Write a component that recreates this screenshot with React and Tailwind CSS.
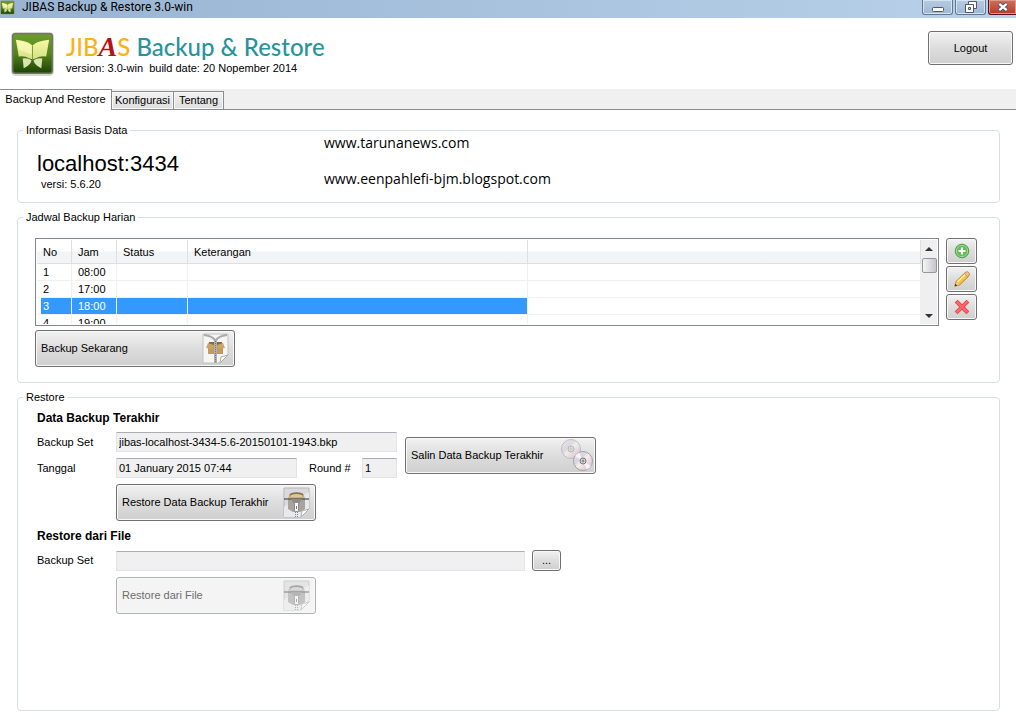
import React, { useState } from 'react';

const SCHEDULE = [
    { no: 1, jam: '08:00' },
    { no: 2, jam: '17:00' },
    { no: 3, jam: '18:00' },
    { no: 4, jam: '19:00' },
];

const TABS = [
    { label: 'Backup And Restore', className: 'w-[112px]' },
    { label: 'Konfigurasi', className: 'w-[62px]' },
    { label: 'Tentang', className: 'w-[50px]' },
];

const AppLogo = ({ className }) => (
    <svg viewBox="0 0 46 46" className={className} aria-hidden="true">
        <defs>
            <linearGradient id="logoBg" x1="0" y1="0" x2="0" y2="1">
                <stop offset="0" stopColor="#6d9d2c" />
                <stop offset="0.5" stopColor="#55831c" />
                <stop offset="1" stopColor="#1d4506" />
            </linearGradient>
            <linearGradient id="logoWing" x1="0" y1="0" x2="0" y2="1">
                <stop offset="0" stopColor="#f8f9a4" />
                <stop offset="1" stopColor="#d5df86" />
            </linearGradient>
        </defs>
        <rect x="1" y="1" width="44" height="45" rx="5" fill="#b9b9b9" opacity="0.6" />
        <rect x="2" y="2" width="42" height="42" rx="3" fill="#6f7a5c" />
        <rect x="3.5" y="3.5" width="39" height="39" rx="2" fill="url(#logoBg)" />
        <path d="M6 9Q17 10 22 14L23 15L24 14Q29 10 40 9L37 26Q31 25 26 28L23 29L20 28Q15 25 9 26Z" fill="url(#logoWing)" />
        <path d="M7 10Q17 11 22 16L22 24L9 19Z" fill="#fbfbc0" opacity="0.6" />
        <path d="M23 15V29" stroke="#7c9a40" />
        <path d="M13 28Q18 27 22 30Q21 35 14 38ZM33 28Q28 27 24 30Q25 35 32 38Z" fill="#dbe4ae" />
    </svg>
);

const BoxFileIcon = () => (
    <svg viewBox="0 0 27 31" className="h-[31px] w-[27px] shrink-0" aria-hidden="true">
        <path d="M1 1H26V22L18 30H1Z" fill="#f5f5f5" stroke="#c2c2c2" />
        <path d="M26 22L18 30L19 24Z" fill="#fff" stroke="#aaa" />
        <path d="M6 12H21V21H6Z" fill="#c49a5c" />
        <path d="M7 9H20L21 13H6Z" fill="#8b683a" />
        <path d="M4 15L6 10L12 12L11 16ZM23 15L21 10L15 12L16 16Z" fill="#cda468" />
        <path d="M2 2Q11 3 13.5 8Q16 3 25 2" fill="none" stroke="#a9a9a9" strokeWidth="2" />
        <path d="M13.5 7V30" stroke="#b0b0b0" strokeWidth="3" />
        <path d="M13.5 8V30" stroke="#7a7a7a" strokeDasharray="1 1" />
    </svg>
);

const ZipFileIcon = ({ gray }) => (
    <svg viewBox="0 0 27 31" className={`h-[31px] w-[27px] shrink-0 ${gray ? 'opacity-60 grayscale' : ''}`} aria-hidden="true">
        <path d="M1 1H26V22L18 30H1Z" fill="#d9dadd" stroke="#b3b5ba" />
        <path d="M1 20L26 5V22L18 30H1Z" fill="#e8e9ec" />
        <path d="M26 22L18 30L19 24Z" fill="#fff" stroke="#b0b0b0" />
        <path d="M5 12H22V22L17 25H10L5 22Z" fill="#a9a49b" />
        <path d="M5 12L6 8Q13 3 21 8L22 12Z" fill="#c9ae80" />
        <ellipse cx="13.5" cy="7.5" rx="7" ry="2.2" fill="#8a7149" />
        <path d="M8 8Q13 6 19 8V10H8Z" fill="#ddc69b" />
        <path d="M1 12H26" stroke="#494b58" strokeWidth="1.2" />
        <path d="M8 12H19L16 17H11Z" fill="#8b8b8b" />
        <rect x="11.5" y="15.5" width="4" height="9" rx="1" fill="#f7f7f7" stroke="#8a8a8a" />
        <path d="M13.5 19V22" stroke="#777" />
        <path d="M12.5 25V30M14.5 25V30" stroke="#888" strokeDasharray="1 1" />
    </svg>
);

const DiscsIcon = () => (
    <svg viewBox="0 0 34 34" className="size-[34px] shrink-0" aria-hidden="true">
        <defs>
            <linearGradient id="disc" x1="0" y1="0" x2="1" y2="1">
                <stop offset="0" stopColor="#ece9ee" />
                <stop offset="0.35" stopColor="#d9d4df" />
                <stop offset="0.5" stopColor="#f4f0e9" />
                <stop offset="0.75" stopColor="#e4cfdb" />
                <stop offset="1" stopColor="#e9e9ee" />
            </linearGradient>
        </defs>
        <g opacity="0.8">
            <circle cx="11" cy="11" r="9.5" fill="url(#disc)" stroke="#b5b2b8" />
            <circle cx="11" cy="11" r="3" fill="#dedede" stroke="#aaa" />
            <circle cx="11" cy="11" r="1" fill="#fff" stroke="#999" strokeWidth="0.6" />
        </g>
        <circle cx="23" cy="23" r="9.5" fill="url(#disc)" stroke="#a39fa6" />
        <path d="M23 23L15 18A9.5 9.5 0 0 1 19 14.5ZM23 23L31 28A9.5 9.5 0 0 1 27 31.5Z" fill="#fff" opacity="0.7" />
        <circle cx="23" cy="23" r="3" fill="#ddd" stroke="#777" />
        <circle cx="23" cy="23" r="1" fill="#fff" stroke="#555" strokeWidth="0.8" />
    </svg>
);

const AddIcon = () => (
    <svg viewBox="0 0 16 16" className="size-4" aria-hidden="true">
        <circle cx="8" cy="8" r="6.8" fill="#62b957" stroke="#4f9e48" />
        <circle cx="8" cy="8" r="5.6" fill="none" stroke="#a3d99b" />
        <path d="M8 4.5V11.5M4.5 8H11.5" stroke="#fff" strokeWidth="2.2" />
    </svg>
);

const EditIcon = () => (
    <svg viewBox="0 0 16 16" className="size-4" aria-hidden="true">
        <path d="M1 15L2 10.5L11 1.8Q13 .3 14.7 2Q16 3.8 14.4 5.5L5.5 14Z" fill="#f4c542" stroke="#b98227" />
        <path d="M3.3 11L11.5 3.2" stroke="#fdf0a0" strokeWidth="1.4" />
        <path d="M10.5 2.3L12 .9Q14 .3 15.2 2Q15.8 4 14.2 5.6L13.6 6Z" fill="#eec0a0" stroke="#b5834f" strokeWidth="0.7" />
        <path d="M1 15L2 11L5 14Z" fill="#e8cf9f" />
        <path d="M.6 15.4L1.3 12.6L3.4 14.7Z" fill="#5b3d12" />
    </svg>
);

const DeleteIcon = () => (
    <svg viewBox="0 0 16 16" className="size-4" aria-hidden="true">
        <path d="M3.5 3.5L12.5 12.5M12.5 3.5L3.5 12.5" stroke="#e5454b" strokeWidth="4" strokeLinecap="square" />
        <path d="M3.5 3.5L12.5 12.5M12.5 3.5L3.5 12.5" stroke="#ff666b" strokeWidth="2.4" strokeLinecap="square" />
    </svg>
);

const Button = ({ className = '', children, ...props }) => (
    <button
        type="button"
        className={`flex shrink-0 items-center rounded-[3px] border border-[#707070] bg-linear-to-b from-[#f2f2f2] from-0% via-[#dddddd] via-50% to-[#cfcfcf] inset-ring inset-ring-[#f8f8f8] disabled:border-[#adb2b5] disabled:from-[#f4f4f4] disabled:via-[#f4f4f4] disabled:to-[#f4f4f4] disabled:text-[#6d6d6d] ${className}`}
        {...props}
    >
        {children}
    </button>
);

const GroupBox = ({ title, className = '', children }) => (
    <fieldset className={`min-w-0 rounded-[4px] border border-[#d5dfe5] ${className}`}>
        <legend className="ml-[5px] px-[3px] leading-[14px]">{title}</legend>
        {children}
    </fieldset>
);

const Field = ({ id, label, labelClass = 'w-[79px]', className, value }) => (
    <>
        <label htmlFor={id} className={`shrink-0 ${labelClass}`}>{label}</label>
        <input
            id={id}
            readOnly
            defaultValue={value}
            className={`h-5 min-w-0 rounded-[1px] border border-[#e2e3ea] border-t-[#abadb3] bg-[#f0f0f0] px-[2px] outline-none ${className}`}
        />
    </>
);

const TitleBar = () => (
    <div className="flex h-[18px] items-start bg-linear-to-r from-[#98b4d2] to-[#b9d1ea]">
        <AppLogo className="size-[15px]" />
        <span className="ml-[7px] flex-1 font-['Roboto',sans-serif] text-[12px] leading-[14px] whitespace-nowrap">
            JIBAS Backup &amp; Restore 3.0-win
        </span>
        <div className="flex gap-[2px]">
            <button type="button" aria-label="Minimize" className="flex h-[15px] w-[31px] items-center justify-center rounded-b-[3px] border border-t-0 border-[#5f7792] bg-linear-to-b from-[#b6cbe1] to-[#9eb8d4] inset-ring inset-ring-[#d6e3f0]">
                <svg viewBox="0 0 12 5" className="mt-1 h-[5px] w-3"><rect x=".5" y=".5" width="11" height="4" rx="1" fill="#fff" stroke="#535766" /></svg>
            </button>
            <button type="button" aria-label="Restore" className="flex h-[15px] w-[31px] items-center justify-center rounded-b-[3px] border border-t-0 border-[#5f7792] bg-linear-to-b from-[#b6cbe1] to-[#9eb8d4] inset-ring inset-ring-[#d6e3f0]">
                <svg viewBox="0 0 12 12" className="size-3">
                    <path d="M3.5.5H11.5V7.5H3.5Z" fill="#fff" stroke="#535766" />
                    <path d="M.5 3.5H8.5V11.5H.5Z" fill="#fff" stroke="#535766" />
                    <path d="M3.5 6.5H5.5V8.5H3.5Z" fill="#b6cbe1" stroke="#535766" />
                </svg>
            </button>
            <button type="button" aria-label="Close" className="flex h-[15px] w-[28px] items-center justify-center rounded-bl-[3px] border-b border-l border-[#5b1017] bg-linear-to-b from-[#cf6f5f] to-[#b53a26] inset-ring inset-ring-[#e0978c]">
                <svg viewBox="0 0 12 10" className="h-[10px] w-3">
                    <path d="M2 1.5L10 8.5M10 1.5L2 8.5" stroke="#535766" strokeWidth="4" />
                    <path d="M2.3 1.8L9.7 8.2M9.7 1.8L2.3 8.2" stroke="#fff" strokeWidth="2.2" />
                </svg>
            </button>
        </div>
    </div>
);

const Header = () => (
    <header className="flex items-start pt-[13px] pr-[3px] pb-3 pl-[10px]">
        <AppLogo className="size-[45px]" />
        <div className="ml-[11px] flex-1">
            <h1 className="h-[28px] font-['Lato',sans-serif] text-[24px] leading-8 font-medium text-[#27949b]">
                <span className="text-[#fbb117]">JIB</span>
                <span className="font-['Liberation_Serif',serif] text-[28px] leading-none font-bold text-[#b8101a] italic">A</span>
                <span className="text-[#fbb117]">S</span> Backup &amp; Restore
            </h1>
            <p className="whitespace-pre leading-[18px]">version: 3.0-win  build date: 20 Nopember 2014</p>
        </div>
        <Button className="h-[34px] w-[85px] justify-center">Logout</Button>
    </header>
);

const Tabs = () => {
    const [active, setActive] = useState(0);
    return (
        <nav role="tablist" className="flex h-[21px] items-end border-b border-[#898c95] bg-[#f0f0f0]">
            {TABS.map((tab, i) => (
                <button
                    key={tab.label}
                    type="button"
                    role="tab"
                    aria-selected={active === i}
                    onClick={() => setActive(i)}
                    className={`shrink-0 border-t border-r border-[#898c95] text-center whitespace-nowrap ${tab.className} ${
                        active === i ? '-mb-px h-[21px] bg-white pb-[2px]' : 'h-[18px] bg-linear-to-b from-[#f3f3f3] to-[#dddddd] inset-ring inset-ring-[#f8f8f8]'
                    }`}
                >
                    {tab.label}
                </button>
            ))}
        </nav>
    );
};

const ScheduleList = () => {
    const [selected, setSelected] = useState(3);
    return (
        <div className="flex h-[88px] min-w-0 flex-1 border border-[#828790] p-px">
            <div className="min-w-0 flex-1 overflow-hidden">
                <table className="w-full table-fixed border-separate border-spacing-0 text-left">
                    <colgroup>
                        <col className="w-[35px]" />
                        <col className="w-[45px]" />
                        <col className="w-[71px]" />
                        <col className="w-[340px]" />
                        <col />
                    </colgroup>
                    <thead>
                        <tr className="h-[24px] bg-linear-to-b from-white from-45% to-[#f3f4f5] to-50% *:border-r *:border-b *:border-[#dfdfe0] *:px-[6px] *:pt-[2px] *:font-normal">
                            <th>No</th>
                            <th>Jam</th>
                            <th>Status</th>
                            <th>Keterangan</th>
                            <th aria-label="Kosong" />
                        </tr>
                    </thead>
                    <tbody>
                        {SCHEDULE.map((row) => {
                            const on = row.no === selected;
                            const fill = on ? 'bg-[#3399ff]' : '';
                            return (
                                <tr
                                    key={row.no}
                                    onClick={() => setSelected(row.no)}
                                    className={`*:h-[17px] *:border-r *:border-b *:border-[#f0f0f0] *:p-0 *:leading-4 ${on ? 'text-white' : ''}`}
                                >
                                    <td><div className={`ml-1 h-4 pl-[2px] ${fill}`}>{row.no}</div></td>
                                    <td className={fill}><div className="pl-[6px]">{row.jam}</div></td>
                                    <td className={fill} />
                                    <td className={fill} />
                                    <td />
                                </tr>
                            );
                        })}
                    </tbody>
                </table>
            </div>
            <div className="flex w-4 flex-col items-center bg-[#efefef]">
                <button type="button" aria-label="Scroll up" className="flex h-[18px] w-full items-center justify-center">
                    <svg viewBox="0 0 8 4" className="h-1 w-2"><path d="M4 0L8 4H0Z" fill="#333" /></svg>
                </button>
                <div className="h-[15px] w-[15px] rounded-[2px] border border-[#979797] bg-linear-to-r from-[#f5f5f5] to-[#c6c6cb]" />
                <button type="button" aria-label="Scroll down" className="mt-auto flex h-[17px] w-full items-center justify-center">
                    <svg viewBox="0 0 8 4" className="h-1 w-2"><path d="M0 0H8L4 4Z" fill="#333" /></svg>
                </button>
            </div>
        </div>
    );
};

const App = () => {
    return (
        <div className="flex min-h-screen flex-col bg-white font-['Liberation_Sans',Arial,sans-serif] text-[11px] text-black">
            <TitleBar />
            <Header />
            <Tabs />

            <main className="flex flex-1 flex-col gap-[7px] pt-[13px] pr-4 pb-[11px] pl-[17px]">
                <GroupBox title="Informasi Basis Data">
                    <div className="flex pb-[10px] pl-[19px]">
                        <div className="w-[287px] pt-[15px]">
                            <p className="text-[22px] leading-6">localhost:3434</p>
                            <p className="pl-1 leading-4">versi: 5.6.20</p>
                        </div>
                        <div className="flex flex-col gap-6 font-['Open_Sans',sans-serif] text-[14px] leading-3">
                            <p>www.tarunanews.com</p>
                            <p>www.eenpahlefi-bjm.blogspot.com</p>
                        </div>
                    </div>
                </GroupBox>

                <GroupBox title="Jadwal Backup Harian">
                    <div className="pt-[14px] pr-[22px] pb-[15px] pl-[17px]">
                        <div className="flex gap-[7px]">
                            <ScheduleList />
                            <div className="flex flex-col gap-[2px]">
                                <Button aria-label="Tambah" className="h-[26px] w-[31px] justify-center"><AddIcon /></Button>
                                <Button aria-label="Ubah" className="h-[26px] w-[31px] justify-center"><EditIcon /></Button>
                                <Button aria-label="Hapus" className="h-[26px] w-[31px] justify-center"><DeleteIcon /></Button>
                            </div>
                        </div>
                        <Button className="mt-1 h-[37px] w-[200px] justify-between px-[5px]">
                            Backup Sekarang
                            <BoxFileIcon />
                        </Button>
                    </div>
                </GroupBox>

                <GroupBox title="Restore" className="flex-1">
                    <div className="flex flex-col items-start gap-[6px] px-[19px] pt-[5px]">
                        <h2 className="pt-px text-[12px] leading-4 font-bold">Data Backup Terakhir</h2>
                        <div className="flex items-center gap-2">
                            <div className="flex flex-col gap-[6px]">
                                <div className="flex items-center">
                                    <Field id="last-set" label="Backup Set" className="w-[281px]" value="jibas-localhost-3434-5.6-20150101-1943.bkp" />
                                </div>
                                <div className="flex items-center">
                                    <Field id="last-date" label="Tanggal" className="w-[181px]" value="01 January 2015 07:44" />
                                    <Field id="last-round" label="Round #" labelClass="w-[65px] pl-3" className="w-[35px]" value="1" />
                                </div>
                            </div>
                            <Button className="h-[37px] w-[191px] justify-between pr-px pl-[5px]">
                                Salin Data Backup Terakhir
                                <DiscsIcon />
                            </Button>
                        </div>
                        <Button className="ml-[79px] h-[37px] w-[200px] justify-between px-[5px]">
                            Restore Data Backup Terakhir
                            <ZipFileIcon />
                        </Button>

                        <h2 className="pt-px text-[12px] leading-4 font-bold">Restore dari File</h2>
                        <div className="flex items-center">
                            <Field id="file-set" label="Backup Set" className="w-[409px]" />
                            <Button aria-label="Pilih file" className="ml-[7px] h-[21px] w-[29px] justify-center">...</Button>
                        </div>
                        <Button disabled className="ml-[79px] h-[37px] w-[200px] justify-between px-[5px]">
                            Restore dari File
                            <ZipFileIcon gray />
                        </Button>
                    </div>
                </GroupBox>
            </main>
        </div>
    );
};

export default App;
